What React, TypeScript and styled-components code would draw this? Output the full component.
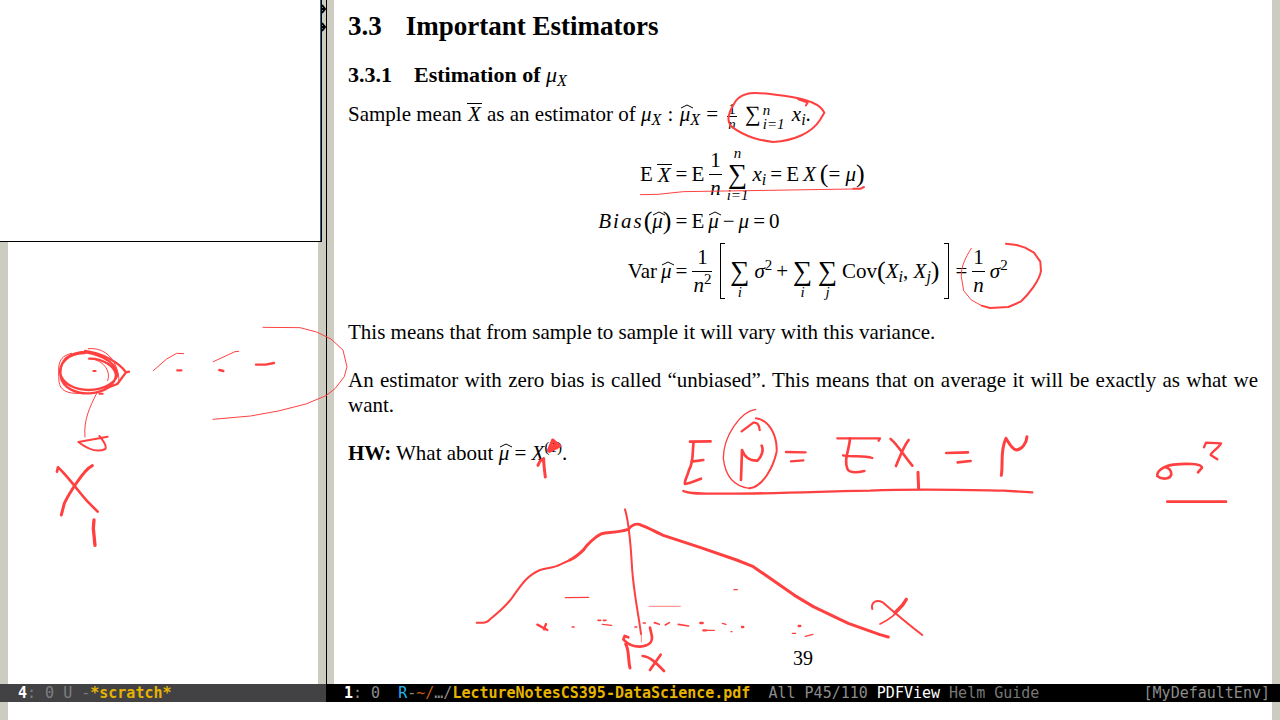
import React from "react";
import styled, { createGlobalStyle } from "styled-components";

const FRINGE = "#ccccc0";
const INK = "#ff4040";

const GlobalStyle = createGlobalStyle`
  * { box-sizing: border-box; }
  body { margin: 0; background: #fff; }
`;

const Frame = styled.div`
  position: relative;
  display: flex;
  flex-direction: column;
  min-height: 100vh;
  overflow: hidden;
  background: #fff;
  color: #000;
`;
const Windows = styled.div`
  display: flex;
  flex: 1;
`;
const Pane = styled.section<{ $side?: boolean }>`
  display: flex;
  flex-direction: column;
  ${(p) => (p.$side ? "flex: 0 0 326px;" : "flex: 1; min-width: 0;")}
`;
const Buffer = styled.div<{ $divided?: boolean }>`
  flex: 1;
  border: 0 solid ${FRINGE};
  border-width: 0 8px;
  ${(p) =>
    p.$divided &&
    `border-left-width: 7px; box-shadow: -1px 0 0 #000; margin-left: 1px;`}
`;
const Floating = styled.div`
  position: absolute;
  top: 0;
  left: 0;
  width: 322px;
  height: 242px;
  background: #fff;
  border-right: 1px solid #000;
  border-bottom: 1px solid #000;
  box-shadow: inset -1px 0 0 #2f6680;
`;
const ModeLine = styled.div<{ $active?: boolean }>`
  display: flex;
  justify-content: space-between;
  height: 18px;
  padding: 0 10px 0 18px;
  background: ${(p) => (p.$active ? "#000" : "#424245")};
  color: ${(p) => (p.$active ? "#8c8c8c" : "#7f7f7f")};
  font: 15px/18px "DejaVu Sans Mono", monospace;
  white-space: pre;
`;
const Tone = styled.span<{ $color: string; $bold?: boolean }>`
  color: ${(p) => p.$color};
  font-weight: ${(p) => (p.$bold ? 700 : 400)};
`;
const MiniBuffer = styled.div`
  height: 18px;
  border: 0 solid ${FRINGE};
  border-width: 0 8px;
`;

const Page = styled.article`
  display: flex;
  flex-direction: column;
  padding: 8px 14px 0;
  font: 21px/24px "Liberation Serif", serif;
`;
const Title = styled.h1`
  display: flex;
  gap: 24px;
  margin: 0 0 17px;
  font-size: 27px;
  line-height: 36px;
`;
const Subtitle = styled.h2`
  display: flex;
  gap: 22px;
  margin: 0 0 13px;
  font-size: 22px;
  line-height: 28px;
`;
const Para = styled.p<{ $gap?: number }>`
  margin: 0 0 ${(p) => p.$gap ?? 23}px;
  line-height: 25px;
  white-space: nowrap;
`;
const Spread = styled.span`
  display: block;
  text-align: justify;
  text-align-last: justify;
`;
const PageNumber = styled.footer`
  font-size: 20px;
  text-align: center;
`;

const Equations = styled.div`
  display: grid;
  grid-template-columns: auto auto;
  grid-template-rows: 54px 40px 60px;
  justify-content: center;
  column-gap: 4px;
  margin-bottom: 19px;
`;
const Side = styled.div<{ $right?: boolean }>`
  display: flex;
  align-items: center;
  gap: 4px;
  justify-content: ${(p) => (p.$right ? "flex-end" : "flex-start")};
`;
const Math = styled.span<{ $wide?: boolean }>`
  font-style: italic;
  font-weight: 400;
  ${(p) => p.$wide && "letter-spacing: 2px;"}
`;
const Relation = styled.span`
  margin: 0 1px;
`;
const Sub = styled.sub`
  font-size: 16px;
  line-height: 0;
  vertical-align: -4px;
  font-style: italic;
  font-weight: 400;
`;
const Sup = styled.sup`
  font-size: 15px;
  line-height: 0;
  vertical-align: 8px;
`;
const Bar = styled(Math)`
  display: inline-block;
  padding: 0 1px;
  line-height: 20px;
  border-top: 1px solid #000;
`;
const HatBox = styled.span`
  position: relative;
  font-style: italic;
  svg {
    position: absolute;
    left: 0;
    top: 2px;
  }
`;
const Fraction = styled.span<{ $small?: boolean }>`
  display: inline-flex;
  flex-direction: column;
  align-items: center;
  vertical-align: middle;
  margin: 0 ${(p) => (p.$small ? 3 : 1)}px;
  font-size: ${(p) => (p.$small ? 15 : 21)}px;
  line-height: ${(p) => (p.$small ? 14 : 27)}px;
  span + span {
    padding: 0 1px;
    border-top: 1px solid #000;
  }
`;
const SumBox = styled.span`
  display: grid;
  grid-template-rows: 14px 28px 14px;
  justify-items: center;
  align-items: center;
  min-width: 21px;
  font-size: 15px;
  font-style: italic;
  line-height: 14px;
`;
const Sigma = styled.span<{ $small?: boolean }>`
  font: ${(p) => (p.$small ? 22 : 27)}px/1 "Liberation Serif", serif;
  ${(p) => p.$small && "line-height: 0;"}
`;
const Limits = styled.span`
  display: inline-flex;
  flex-direction: column;
  vertical-align: middle;
  margin: 0 2px;
  font-size: 15px;
  line-height: 14px;
  font-style: italic;
`;
const Paren = styled.span`
  font-size: 26px;
  line-height: 0;
  vertical-align: -1px;
`;
const Square = styled.span<{ $close?: boolean }>`
  width: 5px;
  height: 56px;
  border: 1px solid #000;
  ${(p) =>
    p.$close
      ? "border-left: 0; margin-right: 3px;"
      : "border-right: 0; margin-left: 3px;"}
`;
const Overlay = styled.svg`
  position: absolute;
  top: 0;
  left: 0;
  pointer-events: none;
`;

const MuHat = () => (
  <HatBox>
    μ
    <svg width="13" height="5" viewBox="0 0 13 5" aria-hidden="true">
      <path d="M1 4 7 1 13 4" fill="none" stroke="#000" />
    </svg>
  </HatBox>
);

const Frac = ({ small, den }: { small?: boolean; den: React.ReactNode }) => (
  <Fraction $small={small}>
    <span>1</span>
    <span>{den}</span>
  </Fraction>
);

const Sum = ({ over, under }: { over?: string; under: string }) => (
  <SumBox>
    <span>{over}</span>
    <Sigma>∑</Sigma>
    <span>{under}</span>
  </SumBox>
);

type Sketch = { x: number; y: number; lines: [number, string][] };

// Pen strokes, stored in thirds of a pixel from each sketch's own origin.
const sketches: Sketch[] = [
  {
    x: 30,
    y: 310,
    lines: [
      [3, "M175 116C215 112 245 135 258 170C270 200 268 225 262 222"],
      [7, "M165 129C110 128 88 165 90 190C100 225 140 240 175 240C225 240 262 215 262 190C255 150 190 125 150 127C100 135 88 165 92 200C98 235 140 252 180 250C225 247 255 225 258 195C255 170 220 145 178 146"],
      [3, "M125 130C80 140 85 170 87 215C90 240 110 252 150 250"],
      [7, "M165 123C215 130 265 155 288 187L297 185M288 187L262 222L235 232"],
      [3, "M175 146C215 146 245 180 233 212"],
      [6, "M190 183h7M208 251h10"],
      [3, "M200 250C180 290 160 330 165 381"],
      [6, "M233 380L145 396C170 415 200 430 226 417C232 408 215 385 208 378"],
      [8, "M81 485L84 472C110 495 150 550 173 575L203 605"],
      [9, "M187 467C160 480 115 555 103 580L94 615"],
      [10, "M192 630L190 655L195 706"],
      [3, "M370 182L410 147L440 130L461 131M550 155L615 125L626 124"],
      [7, "M442 181h12M568 180L580 183M678 164L707 164L732 159"],
      [3, "M699 52L810 53L860 66L903 87L939 120L951 170L943 200L915 236L888 257L828 282L745 303L662 318L549 328"],
    ],
  },
  {
    x: 620,
    y: 80,
    lines: [
      [6, "M340 75C325 100 320 125 335 140C380 175 430 182 460 186C520 182 575 160 600 120L613 98C600 70 560 60 520 52C460 42 400 35 380 42C360 47 346 62 340 75M558 76L563 68L535 58"],
      [3, "M61 344L115 343L190 335L450 331L700 327"],
      [6, "M700 326L722 326L732 321"],
    ],
  },
  {
    x: 810,
    y: 230,
    lines: [
      [3, "M484 55C465 85 453 110 454 140L461 182L484 210L515 227"],
      [6, "M515 227L540 234L595 231L632 215C655 195 690 150 693 122L691 95L672 68L645 53L620 45L588 41"],
    ],
  },
  {
    x: 670,
    y: 400,
    lines: [
      [8, "M122 124L60 125M71 125C66 160 72 185 57 210C50 235 42 245 45 252C60 250 75 243 93 236M64 185L100 180"],
      [4, "M257 28C210 35 160 110 160 175C165 220 185 258 238 265"],
      [6, "M258 55C300 60 322 110 320 155C310 200 280 260 238 265"],
      [7, "M215 94L250 68C262 66 268 75 269 90"],
      [8, "M213 240L216 150C225 175 245 183 262 182C275 170 282 150 275 137"],
      [7, "M348 156L407 157M363 184L400 181"],
      [7, "M502 115L630 115L626 122M519 166C550 172 580 165 607 174"],
      [8, "M540 115C538 150 520 180 533 208C540 220 560 218 583 213"],
      [8, "M662 117C680 130 700 165 727 197M716 120C700 140 690 170 678 198"],
      [9, "M744 217L746 266"],
      [8, "M829 159L894 157M863 187L902 183"],
      [9, "M994 226C1000 190 990 150 1008 115C1015 125 1025 148 1040 150C1055 148 1070 130 1071 110"],
      [7, "M40 273C60 283 100 280 170 281C350 281 500 272 600 272C750 265 900 270 1000 272L1087 277"],
    ],
  },
  {
    x: 1130,
    y: 420,
    lines: [
      [7, "M222 82L228 68L273 70C265 85 245 95 242 105L262 118"],
      [8, "M204 157L216 143C215 130 165 130 130 134C95 140 80 155 82 168C95 180 122 178 124 162C124 150 115 143 108 142"],
      [8, "M112 245L288 245"],
    ],
  },
  {
    x: 460,
    y: 500,
    lines: [
      [6, "M50 368C70 370 85 365 90 358C110 342 140 315 155 295C190 245 205 225 240 210C265 203 285 203 300 194L330 180"],
      [9, "M330 180C350 170 360 160 372 148C380 135 405 110 425 101C450 97 480 96 505 88C515 75 530 68 545 76C570 85 590 98 610 106L720 142L830 180L880 200L1010 290L1060 320L1165 370L1260 404L1285 411"],
      [6, "M495 28C505 60 512 130 516 200C520 270 535 340 543 402"],
      [2, "M544 402V426M567 319H661"],
      [4, "M316 293L386 292M427 373L455 376"],
      [7, "M232 374L262 390M258 372L252 388"],
      [5, "M337 381h5M414 361h8M430 361h8M525 381h5M550 369h6M583 368L598 373M616 375L628 368M655 373L686 378"],
      [8, "M505 412L494 408L490 418C505 435 520 440 540 440C565 438 577 430 576 410L570 383"],
      [9, "M497 432C508 450 504 480 510 504"],
      [8, "M548 468C570 470 590 490 612 513M602 464L570 510"],
    ],
  },
  {
    x: 680,
    y: 560,
    lines: [
      [4, "M162 89h10M127 190L138 193M153 215h3M337 220h10M376 229L399 223M80 211h23"],
      [7, "M61 189h7M70 211h8M186 201h4M356 198h5"],
      [6, "M577 147C572 125 590 118 608 127C640 155 680 190 727 225"],
      [5, "M665 140C650 160 630 178 600 192"],
      [10, "M679 118L668 135L645 158"],
    ],
  },
  {
    x: 340,
    y: 430,
    lines: [
      [9, "M594 106C598 95 605 88 611 86C611 100 614 125 616 141"],
      [9, "M625 62L638 30L660 48L628 64L644 44L650 54"],
    ],
  },
];

export default function App() {
  return (
    <Frame>
      <GlobalStyle />
      <Windows>
        <Pane $side>
          <Buffer />
          <ModeLine>
            <span>
              <Tone $color="#fff" $bold>4</Tone>: 0 U -
              <Tone $color="#e6b400" $bold>*scratch*</Tone>
            </span>
          </ModeLine>
        </Pane>
        <Pane>
          <Buffer $divided>
            <Page>
              <Title>
                <span>3.3</span>
                <span>Important Estimators</span>
              </Title>
              <Subtitle>
                <span>3.3.1</span>
                <span>
                  Estimation of <Math>μ</Math>
                  <Sub>X</Sub>
                </span>
              </Subtitle>
              <Para $gap={16}>
                Sample mean <Bar>X</Bar> as an estimator of <Math>μ</Math>
                <Sub>X</Sub> <Relation>:</Relation> <MuHat />
                <Sub>X</Sub> <Relation>=</Relation>{" "}
                <Frac small den={<i>n</i>} /> <Sigma $small>∑</Sigma>
                <Limits>
                  <span>n</span>
                  <span>i=1</span>
                </Limits>{" "}
                <Math>x</Math>
                <Sub>i</Sub>.
              </Para>
              <Equations>
                <Side $right>
                  <span>E</span>
                  <Bar>X</Bar>
                </Side>
                <Side>
                  <span>=</span>
                  <span>E</span>
                  <Frac den={<i>n</i>} />
                  <Sum over="n" under="i=1" />
                  <span>
                    <Math>x</Math>
                    <Sub>i</Sub>
                  </span>
                  <span>=</span>
                  <span>E</span>
                  <Math>X</Math>
                  <span>
                    <Paren>(</Paren>= <Math>μ</Math>
                    <Paren>)</Paren>
                  </span>
                </Side>
                <Side $right>
                  <span>
                    <Math $wide>Bias</Math>
                    <Paren>(</Paren>
                    <MuHat />
                    <Paren>)</Paren>
                  </span>
                </Side>
                <Side>
                  <span>=</span>
                  <span>E</span>
                  <MuHat />
                  <span>−</span>
                  <Math>μ</Math>
                  <span>=</span>
                  <span>0</span>
                </Side>
                <Side $right>
                  <span>Var</span>
                  <MuHat />
                </Side>
                <Side>
                  <span>=</span>
                  <Frac den={<><i>n</i><Sup>2</Sup></>} />
                  <Square />
                  <Sum under="i" />
                  <span>
                    <Math>σ</Math>
                    <Sup>2</Sup>
                  </span>
                  <span>+</span>
                  <Sum under="i" />
                  <Sum under="j" />
                  <span>
                    Cov<Paren>(</Paren>
                    <Math>X</Math>
                    <Sub>i</Sub>, <Math>X</Math>
                    <Sub>j</Sub>
                    <Paren>)</Paren>
                  </span>
                  <Square $close />
                  <span>=</span>
                  <Frac den={<i>n</i>} />
                  <span>
                    <Math>σ</Math>
                    <Sup>2</Sup>
                  </span>
                </Side>
              </Equations>
              <Para>
                This means that from sample to sample it will vary with this
                variance.
              </Para>
              <Para>
                <Spread>
                  An estimator with zero bias is called “unbiased”. This means
                  that on average it will be exactly as what we
                </Spread>
                want.
              </Para>
              <Para $gap={180}>
                <b>HW:</b> What about <MuHat /> = <Math>X</Math>
                <Sup>(1)</Sup>.
              </Para>
              <PageNumber>39</PageNumber>
            </Page>
          </Buffer>
          <ModeLine $active>
            <span>
              <Tone $color="#fff" $bold>1</Tone>: 0{"  "}
              <Tone $color="#22b5ee">R</Tone>-
              <Tone $color="#c35d10">~/</Tone>…/
              <Tone $color="#e6b400" $bold>LectureNotesCS395-DataScience.pdf</Tone>
              {"  "}All P45/110 <Tone $color="#fff">PDFView</Tone>{" "}
              <Tone $color="#777">Helm Guide</Tone>
            </span>
            <span>[MyDefaultEnv]</span>
          </ModeLine>
        </Pane>
      </Windows>
      <MiniBuffer />
      <Floating />
      <Overlay width="1280" height="720" viewBox="0 0 1280 720" aria-hidden="true">
        <path d="M321 9h4M322 5l3 4-3 4M321 27h4M322 23l3 4-3 4" fill="none" stroke="#000" strokeWidth="2" />
        {sketches.map((s) => (
          <g
            key={`${s.x}-${s.y}`}
            transform={`translate(${s.x} ${s.y}) scale(.3333)`}
            fill="none"
            stroke={INK}
            strokeLinecap="round"
            strokeLinejoin="round"
          >
            {s.lines.map(([w, d]) => (
              <path key={d} d={d} strokeWidth={w} />
            ))}
          </g>
        ))}
      </Overlay>
    </Frame>
  );
}
